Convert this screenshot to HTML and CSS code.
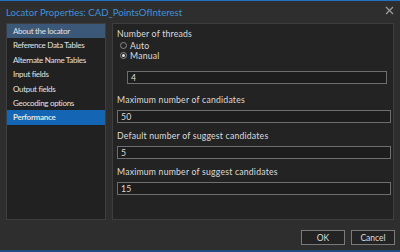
FILE: index.html
```html
<!DOCTYPE html>
<html>
<head>
<meta charset="utf-8">
<link rel="stylesheet" href="styles.css">
</head>
<body>
<div class="window">
  <div class="topline"></div>
  <div class="titlebar">
    <span class="title">Locator Properties: CAD_PointsOfInterest</span>
    <svg class="close" width="9" height="9" viewBox="0 0 9 9"><path d="M1 1 L8 8 M8 1 L1 8" stroke="#9a9a9a" stroke-width="1.3"/></svg>
  </div>
  <div class="main">
    <div class="nav">
      <div class="item sel-dim">About the locator</div>
      <div class="item">Reference Data Tables</div>
      <div class="item">Alternate Name Tables</div>
      <div class="item">Input fields</div>
      <div class="item">Output fields</div>
      <div class="item">Geocoding options</div>
      <div class="item sel">Performance</div>
    </div>
    <div class="content">
      <div class="label">Number of threads</div>
      <div class="radios">
        <div class="radio"><span class="dot"></span>Auto</div>
        <div class="radio"><span class="dot on"></span>Manual</div>
      </div>
      <div class="field indent">4</div>
      <div class="label gap">Maximum number of candidates</div>
      <div class="field">50</div>
      <div class="label gap">Default number of suggest candidates</div>
      <div class="field">5</div>
      <div class="label gap">Maximum number of suggest candidates</div>
      <div class="field">15</div>
    </div>
  </div>
  <div class="footer">
    <div class="btn">OK</div>
    <div class="btn">Cancel</div>
  </div>
  <div class="bottomline"></div>
</div>
</body>
</html>
```
FILE: styles.css
```css
html, body {
  margin: 0;
  padding: 0;
  background: #2e2e2e;
}
.window {
  width: 400px;
  height: 252px;
  background: #2e2e2e;
  display: flex;
  flex-direction: column;
  font-family: Lato, "Open Sans", sans-serif;
  color: #dcdcdc;
  overflow: hidden;
}
.topline {
  height: 1px;
  background: #1f72c4;
}
.titlebar {
  height: 22px;
  display: flex;
  align-items: center;
  justify-content: space-between;
  padding: 0 6px 0 6px;
  box-sizing: border-box;
}
.title {
  font-size: 9.6px;
  color: #3d92dc;
}
.close {
  margin-top: -3px;
}
.main {
  display: flex;
  gap: 6px;
  padding: 0 6px;
  height: 197px;
}
.nav {
  width: 100px;
  box-sizing: border-box;
  background: #212121;
  border: 1px solid #3e3e3e;
  font-size: 8px;
  letter-spacing: -0.3px;
  color: #e2e2e2;
}
.item {
  height: 14.4px;
  line-height: 14.4px;
  padding-left: 6px;
  white-space: nowrap;
}
.sel-dim {
  background: #3b5878;
}
.sel {
  background: #1466b4;
  font-weight: 700;
}
.content {
  flex: 1;
  box-sizing: border-box;
  background: #232323;
  border: 1px solid #3e3e3e;
  padding: 4px 2px 0 4px;
  font-size: 8.7px;
  letter-spacing: 0.2px;
  display: flex;
  flex-direction: column;
}
.label {
  height: 11px;
  line-height: 11px;
}
.label.gap {
  margin-top: 7px;
  margin-bottom: 5px;
}
.radios {
  padding-left: 3px;
  margin-top: 2px;
}
.radio {
  display: flex;
  align-items: center;
  height: 9.5px;
}
.dot {
  width: 7px;
  height: 7px;
  border-radius: 50%;
  border: 1px solid #8a8a8a;
  box-sizing: border-box;
  margin-right: 3px;
  display: flex;
  align-items: center;
  justify-content: center;
}
.dot.on::after {
  content: "";
  width: 3px;
  height: 3px;
  border-radius: 50%;
  background: #e8e8e8;
}
.field {
  height: 13px;
  box-sizing: border-box;
  border: 1px solid #6e6e6e;
  background: #1d1d1d;
  line-height: 11px;
  padding-left: 3px;
}
.field.indent {
  margin-left: 10px;
  margin-right: 4px;
  margin-top: 11px;
  margin-bottom: 3px;
}
.footer {
  display: flex;
  justify-content: flex-end;
  gap: 6px;
  padding: 10px 5px 0 0;
  height: 30px;
  box-sizing: border-box;
}
.btn {
  width: 44px;
  height: 15px;
  box-sizing: border-box;
  border: 1px solid #7a7a7a;
  background: #232323;
  font-size: 8.5px;
  display: flex;
  align-items: center;
  justify-content: center;
}
.bottomline {
  height: 2px;
  background: #1d4f82;
}
```
